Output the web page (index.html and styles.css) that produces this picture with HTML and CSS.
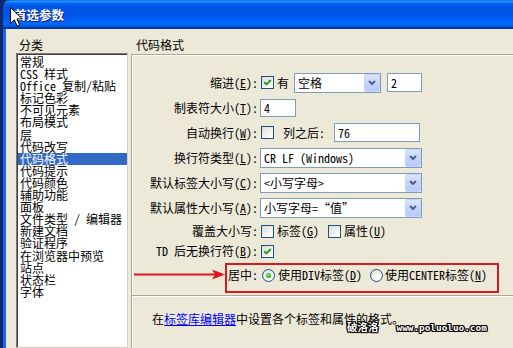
FILE: index.html
```html
<!DOCTYPE html>
<html lang="zh-CN">
<head>
<meta charset="utf-8">
<title>首选参数</title>
<link rel="stylesheet" href="styles.css">
</head>
<body>
<div class="window">
  <div class="titlebar"><span class="title">首选参数</span></div>
  <div class="client">
    <div class="cat">
      <div class="cap">分类</div>
      <ul class="list">
        <li>常规</li>
        <li>CSS 样式</li>
        <li>Office 复制/粘贴</li>
        <li>标记色彩</li>
        <li>不可见元素</li>
        <li>布局模式</li>
        <li>层</li>
        <li>代码改写</li>
        <li class="sel">代码格式</li>
        <li>代码提示</li>
        <li>代码颜色</li>
        <li>辅助功能</li>
        <li>面板</li>
        <li>文件类型 / 编辑器</li>
        <li>新建文档</li>
        <li>验证程序</li>
        <li>在浏览器中预览</li>
        <li>站点</li>
        <li>状态栏</li>
        <li>字体</li>
      </ul>
    </div>
    <div class="pane">
      <div class="cap head">代码格式</div>
      <div class="group">
        <div class="form">
          <div class="lbl">缩进(<u>E</u>):</div>
          <div class="ctl">
            <span class="cb"><svg viewBox="0 0 11 11"><path d="M2.2 5.2 L4.4 7.4 L8.8 3"/></svg></span>
            <span class="txt g3">有</span>
            <div class="select w87 g5"><span class="val">空格</span><span class="btn"><svg viewBox="0 0 8 5"><path d="M1 1 L4 4 L7 1"/></svg></span></div>
            <div class="input w35 g6">2</div>
          </div>

          <div class="lbl">制表符大小(<u>T</u>):</div>
          <div class="ctl"><div class="input w36 h18">4</div></div>

          <div class="lbl">自动换行(<u>W</u>):</div>
          <div class="ctl">
            <span class="cb"></span>
            <span class="txt g9">列之后:</span>
            <div class="input w86 g9">76</div>
          </div>

          <div class="lbl">换行符类型(<u>L</u>):</div>
          <div class="ctl">
            <div class="select w162"><span class="val">CR LF (Windows)</span><span class="btn"><svg viewBox="0 0 8 5"><path d="M1 1 L4 4 L7 1"/></svg></span></div>
          </div>

          <div class="lbl">默认标签大小写(<u>C</u>):</div>
          <div class="ctl">
            <div class="select w162"><span class="val">&lt;小写字母&gt;</span><span class="btn"><svg viewBox="0 0 8 5"><path d="M1 1 L4 4 L7 1"/></svg></span></div>
          </div>

          <div class="lbl">默认属性大小写(<u>A</u>):</div>
          <div class="ctl">
            <div class="select w162"><span class="val">小写字母=“值”</span><span class="btn"><svg viewBox="0 0 8 5"><path d="M1 1 L4 4 L7 1"/></svg></span></div>
          </div>

          <div class="lbl">覆盖大小写:</div>
          <div class="ctl">
            <span class="cb"></span>
            <span class="txt g3">标签(<u>G</u>)</span>
            <span class="cb g9"></span>
            <span class="txt g3">属性(<u>U</u>)</span>
          </div>

          <div class="lbl">TD 后无换行符(<u>B</u>):</div>
          <div class="ctl">
            <span class="cb"><svg viewBox="0 0 11 11"><path d="M2.2 5.2 L4.4 7.4 L8.8 3"/></svg></span>
          </div>

          <div class="lbl">居中:</div>
          <div class="ctl">
            <span class="rb on"></span>
            <span class="txt g3">使用DIV标签(<u>D</u>)</span>
            <span class="rb g8"></span>
            <span class="txt g2">使用CENTER标签(<u>N</u>)</span>
          </div>
        </div>
        <div class="sep"></div>
        <p class="hint">在<a href="#">标签库编辑器</a>中设置各个标签和属性的格式。</p>
      </div>
    </div>
  </div>
</div>

<div class="redbox"></div>
<svg class="arrow" viewBox="0 0 93 13" width="93" height="13"><path class="shaft" d="M0 6.5 H84"/><path class="head" d="M78 1.5 L91 6.5 L78 11.5 L81 6.5 Z"/></svg>
<div class="wm">破洛洛<span class="url">www.poluoluo.com</span></div>
<svg class="cursor" viewBox="0 0 13 20" width="13" height="20"><path d="M0.5 0.5 V16.5 L4.3 12.8 L7 19 L9.6 17.9 L7 11.9 L12.2 11.9 Z"/></svg>
</body>
</html>
```

FILE: styles.css
```css
* { box-sizing: border-box; margin: 0; padding: 0; }

html, body {
  width: 513px;
  height: 348px;
  overflow: hidden;
}

body {
  position: relative;
  background: #12286c;
  color: #000;
  font: 12px/14px "Noto Sans Mono CJK SC", "Noto Sans CJK SC", "DejaVu Sans Mono", monospace;
}

.window {
  margin-left: 3px;
  height: 348px;
  display: flex;
  flex-direction: column;
}

.titlebar {
  flex: none;
  height: 29px;
  border-top-left-radius: 7px;
  display: flex;
  align-items: center;
  padding-left: 11px;
  background: linear-gradient(to bottom,
    #0058ee 0%, #3593ff 4%, #288eff 6%, #127dff 8%, #036ffc 10%,
    #0262ee 14%, #0057e5 20%, #0054e3 24%, #0055eb 56%, #005bf5 66%,
    #026afe 76%, #0062ef 86%, #0052d6 92%, #0040ab 94%, #003092 100%);
}

.title {
  color: #fff;
  font: bold 12.5px/14px "Noto Sans CJK SC", sans-serif;
  text-shadow: 1px 1px #0a1a7a;
}

.client {
  flex: 1;
  min-height: 0;
  display: flex;
  gap: 3px;
  background: #ece9d8;
  border-left: 3px solid #2262e8;
  padding: 9px 0 0 10px;
}

.cat {
  flex: none;
  width: 112px;
  display: flex;
  flex-direction: column;
}

.cap {
  height: 15px;
  line-height: 14px;
  padding-left: 3px;
  white-space: nowrap;
}

.list {
  flex: 1;
  list-style: none;
  background: #fff;
  border: 1px solid;
  border-color: #7a7a7a #d4d0c8 #d4d0c8 #7a7a7a;
  box-shadow: inset 1px 1px #404040;
  padding: 2px 0 0 1px;
  overflow: hidden;
}

.list li {
  height: 12.1px;
  line-height: 12.1px;
  padding-left: 2px;
  white-space: nowrap;
}

.list li.sel {
  background: #316ac5;
  color: #fff;
}

.pane {
  flex: 1;
  min-width: 0;
  display: flex;
  flex-direction: column;
}

.cap.head {
  height: 16px;
  padding-left: 5px;
}

.group {
  flex: 1;
  border-top: 1px solid #aca899;
  border-left: 1px solid #aca899;
  box-shadow: inset 1px 1px #fff;
}

.form {
  display: grid;
  grid-template-columns: 126px auto;
  grid-template-rows: 25px 25px 25px 25px 25px 25px 22px 18px 30px;
  column-gap: 2px;
  align-items: center;
  padding-top: 15px;
}

.lbl {
  text-align: right;
  white-space: nowrap;
}

.ctl {
  display: flex;
  align-items: center;
  white-space: nowrap;
}

.txt { flex: none; }

.g2 { margin-left: 2px; }
.g3 { margin-left: 3px; }
.g5 { margin-left: 5px; }
.g6 { margin-left: 6px; }
.g8 { margin-left: 8px; }
.g9 { margin-left: 9px; }

/* checkbox */
.cb {
  flex: none;
  width: 13px;
  height: 13px;
  margin-left: 1px;
  border: 1px solid #1c5180;
  background: linear-gradient(135deg, #dcdcd7 0%, #ededea 45%, #fbfbfa 80%, #fff 100%);
  display: inline-flex;
}
.cb.g9 { margin-left: 9px; }

.cb svg {
  width: 11px;
  height: 11px;
}
.cb svg path {
  fill: none;
  stroke: #21a121;
  stroke-width: 2;
}

/* radio */
.rb {
  flex: none;
  width: 13px;
  height: 13px;
  margin-left: 2px;
  border-radius: 50%;
  border: 1px solid #1c5180;
  background: radial-gradient(circle at 70% 70%, #ffffff 0%, #f3f3ef 40%, #dcdcd7 100%);
  display: inline-flex;
  align-items: center;
  justify-content: center;
}
.rb.g8 { margin-left: 8px; }

.rb.on::after {
  content: "";
  width: 5px;
  height: 5px;
  border-radius: 50%;
  background: radial-gradient(circle at 40% 40%, #8ee88e 0%, #2fb52f 55%, #1a8f1a 100%);
}

/* select */
.select {
  flex: none;
  height: 20px;
  border: 1px solid #7f9db9;
  background: #fff;
  display: flex;
  align-items: center;
}
.select .val {
  flex: 1;
  min-width: 0;
  padding-left: 3px;
  line-height: 14px;
  white-space: nowrap;
}
.select .btn {
  flex: none;
  width: 16px;
  align-self: stretch;
  margin: 0 0 0 1px;
  border: 1px solid #c3d3fd;
  border-radius: 2px;
  background: linear-gradient(to bottom, #dce6fd 0%, #c6d6fc 45%, #b6cafa 100%);
  display: flex;
  align-items: center;
  justify-content: center;
}
.select .btn svg {
  width: 8px;
  height: 5px;
}
.select .btn svg path {
  fill: none;
  stroke: #4d6185;
  stroke-width: 2;
}

.w87 { width: 87px; }
.w162 { width: 162px; }

/* text input */
.input {
  flex: none;
  height: 19px;
  line-height: 17px;
  border: 1px solid #7f9db9;
  background: #fff;
  padding-left: 3px;
}
.input.h18 { height: 18px; line-height: 16px; }
.w35 { width: 35px; }
.w36 { width: 36px; }
.w86 { width: 86px; }

.sep {
  margin-top: 5px;
  height: 2px;
  border-top: 1px solid #aca899;
  border-bottom: 1px solid #fff;
}

.hint {
  margin-top: 15px;
  padding-left: 20px;
  line-height: 14px;
  white-space: nowrap;
}

.hint a {
  color: #0000ff;
  text-decoration: underline;
}

/* annotations over the screenshot */
.redbox {
  position: absolute;
  left: 225px;
  top: 263px;
  width: 274px;
  height: 30px;
  border: 2px solid #d9191f;
}

.arrow {
  position: absolute;
  left: 134px;
  top: 268px;
}
.arrow .shaft {
  stroke: #e0141c;
  stroke-width: 2;
}
.arrow .head {
  fill: #e0141c;
}

.wm {
  position: absolute;
  left: 347px;
  top: 321px;
  color: #fff;
  font: bold 10.5px/12px "Noto Sans CJK SC", sans-serif;
  white-space: nowrap;
  text-shadow: -1px 0 #000, 1px 0 #000, 0 -1px #000, 0 1px #000,
               -1px -1px #000, 1px 1px #000, -1px 1px #000, 1px -1px #000;
}
.wm .url {
  margin-left: 18px;
  font: bold 9.4px/12px "DejaVu Sans Mono", monospace;
}

.cursor {
  position: absolute;
  left: 10px;
  top: 7px;
}
.cursor path {
  fill: #fff;
  stroke: #000;
  stroke-width: 1;
}
```
